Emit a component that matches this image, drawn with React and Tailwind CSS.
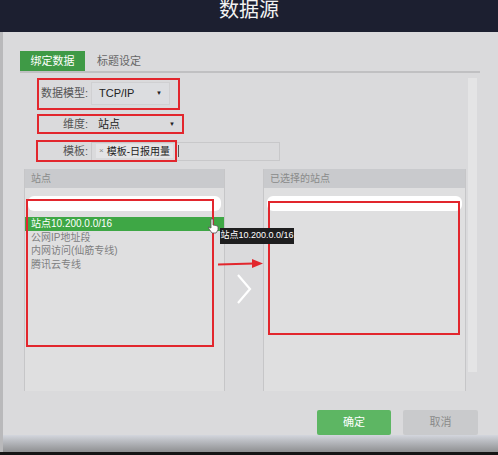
import React from 'react';

const sites = ['站点10.200.0.0/16', '公网IP地址段', '内网访问(仙筋专线)', '腾讯云专线'];

function Panel({ title, children }) {
  return (
    <div className="flex h-full flex-col border-x border-[#c6c6c8] bg-[#dfdfe0]">
      <div className="flex h-[19px] items-center bg-[#c9cacd] pl-[6px] text-[10px] text-[#8a8a8a]">{title}</div>
      <div className="mx-[3px] mt-[8px] h-[15px] rounded-[6px] bg-white"></div>
      {children}
    </div>
  );
}

export default function App() {
  return (
    <div className="relative h-[455px] w-[498px] overflow-hidden bg-[#151515] font-['Liberation_Sans','Noto_Sans_CJK_SC',sans-serif]">
      <div className="flex h-[32px] justify-center bg-[#1c1f30]">
        <h1 className="text-[20px] leading-[20px] text-[#f2f2f2]">数据源</h1>
      </div>

      <div className="relative flex h-[420px] flex-col border-l-[3px] border-[#b9b9bb] bg-[#dadadc]">
        {/* tabs */}
        <div className="ml-[17px] mr-[18px] mt-[19px]">
          <div className="flex items-center">
            <div className="flex h-[20px] w-[65px] items-center justify-center bg-[#3f9a46] text-[11px] text-white">绑定数据</div>
            <div className="ml-[12px] text-[11px] text-[#666]">标题设定</div>
          </div>
          <div className="h-[2px] bg-[#c0c0c2]"></div>
        </div>

        {/* form */}
        <div className="mt-[9px] flex items-center">
          <div className="w-[85px] text-right text-[11px] text-[#555]">数据模型:</div>
          <div className="ml-[3px] flex h-[23px] w-[79px] items-center justify-between border border-[#d0d0d2] bg-[#dcdde0] px-[7px] text-[11px] text-[#222]">
            <span>TCP/IP</span>
            <span className="text-[6px]">▼</span>
          </div>
        </div>
        <div className="mt-[11px] flex items-center">
          <div className="w-[85px] text-right text-[11px] text-[#555]">维度:</div>
          <div className="ml-[3px] flex h-[16px] w-[89px] items-center justify-between pl-[7px] pr-[5px] text-[11px] text-[#222]">
            <span>站点</span>
            <span className="text-[6px]">▼</span>
          </div>
        </div>
        <div className="mt-[9px] flex items-center">
          <div className="w-[85px] text-right text-[11px] text-[#555]">模板:</div>
          <div className="ml-[3px] flex h-[19px] w-[189px] items-center border border-[#c8c8ca] pl-[4px]">
            <div className="flex h-[14px] items-center bg-[#e4e4e6] px-[3px] text-[10px] text-[#222]">
              <span className="mr-[3px] text-[8px] text-[#888]">×</span>模板-日报用量
            </div>
            <div className="ml-[5px] h-[12px] w-[1px] bg-[#555]"></div>
          </div>
        </div>

        {/* panels */}
        <div className="mt-[8px] flex h-[224px] pl-[21px]">
          <div className="w-[201px]">
            <Panel title="站点">
              <div className="mt-[6px] flex flex-col text-[10px]">
                {sites.map((s, i) => (
                  <div
                    key={s}
                    className={i === 0 ? 'flex h-[14px] items-center bg-[#3ea745] pl-[6px] text-white' : 'flex h-[13.5px] items-center pl-[6px] text-[#808080]'}
                  >
                    {s}
                  </div>
                ))}
              </div>
            </Panel>
          </div>
          <div className="flex w-[38px] items-start justify-center pt-[105px]">
            <svg width="16" height="30" viewBox="0 0 16 30" fill="none">
              <path d="M2 1 L14 15 L2 29" stroke="#ffffff" strokeWidth="2.2" />
            </svg>
          </div>
          <div className="w-[203px]">
            <Panel title="已选择的站点" />
          </div>
        </div>

        {/* scroll track */}
        <div className="absolute left-[465px] top-[46px] h-[294px] w-[9px] bg-[#e4e4e5]"></div>

        {/* buttons */}
        <div className="mt-[19px] flex justify-end gap-[12px] pr-[20px]">
          <button className="h-[25px] w-[74px] rounded-[2px] bg-[#5db663] text-[11px] text-white">确定</button>
          <button className="h-[25px] w-[75px] rounded-[2px] bg-[#c9cacc] text-[11px] text-[#8a8a8a]">取消</button>
        </div>
        <div className="mt-auto h-[17px] bg-gradient-to-b from-[#d3d6dd] to-[#8f9092]"></div>
      </div>

      {/* annotations */}
      <div className="absolute left-[37px] top-[78px] h-[32px] w-[143px] border-2 border-[#e2262d]"></div>
      <div className="absolute left-[37px] top-[114px] h-[20px] w-[147px] border-2 border-[#e2262d]"></div>
      <div className="absolute left-[36px] top-[140px] h-[22px] w-[141px] border-2 border-[#e2262d]"></div>
      <div className="absolute left-[26px] top-[199px] h-[148px] w-[188px] border-2 border-[#e2262d]"></div>
      <div className="absolute left-[268px] top-[201px] h-[134px] w-[192px] border-2 border-[#e2262d]"></div>
      <svg className="absolute left-[218px] top-[258px]" width="46" height="12" viewBox="0 0 46 12">
        <path d="M0 6.5 L36 5.5" stroke="#e2262d" strokeWidth="2" />
        <path d="M34 1 L45 5.5 L34 10 Z" fill="#e2262d" />
      </svg>

      {/* tooltip + cursor */}
      <div className="absolute left-[220px] top-[228px] flex h-[16px] w-[74px] items-center justify-center whitespace-nowrap bg-[#1e1e1f] text-[9px] text-white">站点10.200.0.0/16</div>
      <svg className="absolute left-[207px] top-[218px]" width="13" height="16" viewBox="0 0 13 16">
        <path d="M4 1 L6 1 L6 7 L9 7.5 L11 8.5 L11 12 L9 15 L5 15 L2 11 L1.5 9 L4 10 Z" fill="#ffffff" stroke="#555" strokeWidth="0.8" />
      </svg>
    </div>
  );
}
